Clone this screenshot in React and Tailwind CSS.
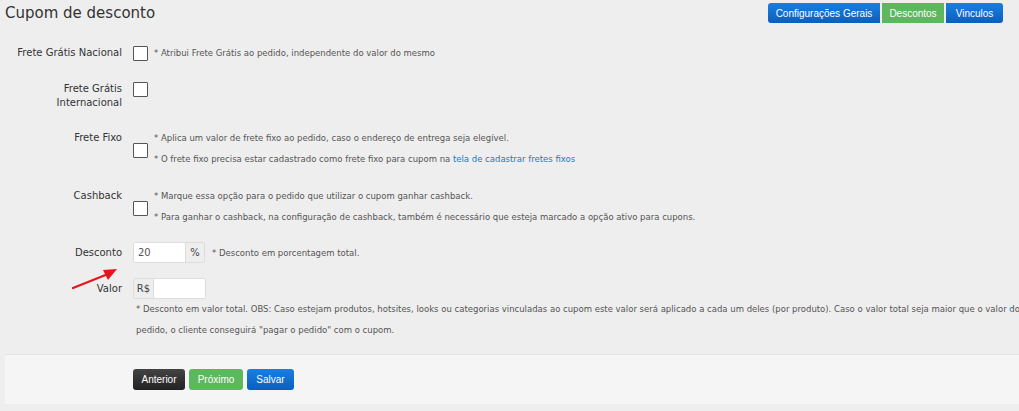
import React, { useState } from 'react';

const label = 'text-[10px] text-[#333] text-right w-[122px] shrink-0 leading-[14px]';
const hint = 'text-[8.5px] text-[#555] leading-[12px] whitespace-nowrap';

function Check({ checked, onChange }) {
  return (
    <button
      onClick={onChange}
      className="w-[15px] h-[15px] bg-white border border-[#555] rounded-[1px] shrink-0 flex items-center justify-center text-[10px] leading-none"
    >
      {checked ? '✓' : ''}
    </button>
  );
}

function Tabs() {
  return (
    <div className="flex gap-[2px] text-[10px] text-white" style={{ fontFamily: '"Liberation Sans", Arial, sans-serif' }}>
      <span className="h-[20px] w-[112px] flex items-center justify-center rounded-l-[3px] bg-gradient-to-b from-[#1a7fe0] to-[#0a5fbf]">Configurações Gerais</span>
      <span className="h-[20px] w-[62px] flex items-center justify-center bg-[#5cb85c]">Descontos</span>
      <span className="h-[20px] w-[57px] flex items-center justify-center rounded-r-[3px] bg-gradient-to-b from-[#1a7fe0] to-[#0a5fbf]">Vinculos</span>
    </div>
  );
}

export default function App() {
  const [flags, setFlags] = useState({ nacional: false, internacional: false, fixo: false, cashback: false });
  const [desconto, setDesconto] = useState('20');
  const [valor, setValor] = useState('');

  const toggle = (k) => setFlags({ ...flags, [k]: !flags[k] });

  return (
    <div className="w-[1019px] h-[411px] overflow-hidden bg-[#eeeeee]" style={{ fontFamily: '"DejaVu Sans", Verdana, sans-serif' }}>
      <div className="flex justify-between items-start pl-[5px] pr-[16px] pt-[2px]">
        <h1 className="text-[15px] text-[#333] leading-[22px]">Cupom de desconto</h1>
        <div className="pt-[1px]">
          <Tabs />
        </div>
      </div>

      <div className="pt-[21px]">
        {/* frete gratis nacional */}
        <div className="flex items-center gap-[11px] h-[16px]">
          <span className={label}>Frete Grátis Nacional</span>
          <Check checked={flags.nacional} onChange={() => toggle('nacional')} />
          <span className={hint + ' -ml-[5px]'}>* Atribui Frete Grátis ao pedido, independente do valor do mesmo</span>
        </div>

        {/* frete gratis internacional */}
        <div className="flex items-start gap-[11px] mt-[21px]">
          <span className={label}>Frete Grátis<br />Internacional</span>
          <Check checked={flags.internacional} onChange={() => toggle('internacional')} />
        </div>

        {/* frete fixo */}
        <div className="flex items-start gap-[11px] mt-[19px]">
          <span className={label + ' pt-[2px]'}>Frete Fixo</span>
          <div className="pt-[14px]">
            <Check checked={flags.fixo} onChange={() => toggle('fixo')} />
          </div>
          <div className="-ml-[5px] pt-[3px] flex flex-col gap-[9px]">
            <span className={hint}>* Aplica um valor de frete fixo ao pedido, caso o endereço de entrega seja elegível.</span>
            <span className={hint}>
              * O frete fixo precisa estar cadastrado como frete fixo para cupom na{' '}
              <a className="text-[#1a7bc4]">tela de cadastrar fretes fixos</a>
            </span>
          </div>
        </div>

        {/* cashback */}
        <div className="flex items-start gap-[11px] mt-[22px]">
          <span className={label + ' pt-[2px]'}>Cashback</span>
          <div className="pt-[14px]">
            <Check checked={flags.cashback} onChange={() => toggle('cashback')} />
          </div>
          <div className="-ml-[5px] pt-[3px] flex flex-col gap-[9px]">
            <span className={hint}>* Marque essa opção para o pedido que utilizar o cupom ganhar cashback.</span>
            <span className={hint}>* Para ganhar o cashback, na configuração de cashback, também é necessário que esteja marcado a opção ativo para cupons.</span>
          </div>
        </div>

        {/* desconto % */}
        <div className="relative flex items-center gap-[11px] mt-[19px]">
          <span className={label}>Desconto</span>
          <div className="flex h-[21px] border border-[#ddd] rounded-[2px] overflow-hidden">
            <input
              value={desconto}
              onChange={(e) => setDesconto(e.target.value)}
              className="w-[51px] bg-white px-[4px] text-[10px] text-[#555] outline-none"
            />
            <span className="w-[19px] bg-[#eee] border-l border-[#ddd] text-[10px] text-[#444] flex items-center justify-center">%</span>
          </div>
          <span className={hint + ' -ml-[4px]'}>* Desconto em porcentagem total.</span>
          <svg className="absolute left-[70px] top-[23px]" width="50" height="26" viewBox="0 0 50 26">
            <line x1="3" y1="23" x2="38" y2="9" stroke="#e8141b" strokeWidth="2.2" strokeLinecap="round" />
            <polygon points="47,4 33,5 38,15" fill="#e8141b" />
          </svg>
        </div>

        {/* valor R$ */}
        <div className="flex items-center gap-[11px] mt-[15px]">
          <span className={label}>Valor</span>
          <div className="flex h-[21px] border border-[#ddd] rounded-[2px] overflow-hidden">
            <span className="w-[20px] bg-[#eee] border-r border-[#ddd] text-[10px] text-[#444] flex items-center justify-center">R$</span>
            <input
              value={valor}
              onChange={(e) => setValor(e.target.value)}
              className="w-[51px] bg-white px-[4px] text-[10px] text-[#555] outline-none"
            />
          </div>
        </div>
        <div className="pl-[136px] mt-[4px] flex flex-col gap-[9px]">
          <span className={hint}>* Desconto em valor total. OBS: Caso estejam produtos, hotsites, looks ou categorias vinculadas ao cupom este valor será aplicado a cada um deles (por produto). Caso o valor total seja maior que o valor do</span>
          <span className={hint}>pedido, o cliente conseguirá "pagar o pedido" com o cupom.</span>
        </div>
      </div>

      {/* footer actions */}
      <div className="mt-[18px] ml-[5px] h-[50px] bg-[#f5f5f5] border-t border-[#e3e3e3] flex items-center pl-[128px] gap-[4px] text-[10px] text-white" style={{ fontFamily: '"Liberation Sans", Arial, sans-serif' }}>
        <button className="h-[21px] w-[52px] rounded-[3px] bg-gradient-to-b from-[#444] to-[#222]">Anterior</button>
        <button className="h-[21px] w-[54px] rounded-[3px] bg-[#5cb85c]">Próximo</button>
        <button className="h-[21px] w-[47px] rounded-[3px] bg-gradient-to-b from-[#1a7fe0] to-[#0a5fbf]">Salvar</button>
      </div>
    </div>
  );
}
